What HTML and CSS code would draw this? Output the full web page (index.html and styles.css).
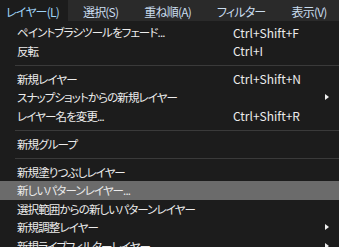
FILE: index.html
```html
<!DOCTYPE html>
<html lang="ja">
<head>
    <meta charset="UTF-8">
    <title>レイヤー</title>
    <link rel="stylesheet" href="styles.css">
</head>
<body>
    <div class="menubar">
        <span class="menubar-item active">レイヤー(L)</span>
        <span class="menubar-item">選択(S)</span>
        <span class="menubar-item">重ね順(A)</span>
        <span class="menubar-item">フィルター</span>
        <span class="menubar-item">表示(V)</span>
    </div>

    <div class="menu">
        <div class="menu-item"><span class="label">ペイントブラシツールをフェード...</span><span class="shortcut">Ctrl+Shift+F</span></div>
        <div class="menu-item"><span class="label">反転</span><span class="shortcut">Ctrl+I</span></div>
        <div class="separator"></div>
        <div class="menu-item"><span class="label">新規レイヤー</span><span class="shortcut">Ctrl+Shift+N</span></div>
        <div class="menu-item sub"><span class="label">スナップショットからの新規レイヤー</span></div>
        <div class="menu-item"><span class="label">レイヤー名を変更...</span><span class="shortcut">Ctrl+Shift+R</span></div>
        <div class="separator"></div>
        <div class="menu-item"><span class="label">新規グループ</span></div>
        <div class="separator"></div>
        <div class="menu-item"><span class="label">新規塗りつぶしレイヤー</span></div>
        <div class="menu-item hover"><span class="label">新しいパターンレイヤー...</span></div>
        <div class="menu-item"><span class="label">選択範囲からの新しいパターンレイヤー</span></div>
        <div class="menu-item sub"><span class="label">新規調整レイヤー</span></div>
        <div class="menu-item sub"><span class="label">新規ライブフィルターレイヤー</span></div>
    </div>
</body>
</html>
```

FILE: styles.css
```css
body {
    margin: 0;
    background-color: #1c1c1c;
    font-family: "Noto Sans CJK JP", sans-serif;
    font-size: 11.5px;
    font-feature-settings: "palt";
    overflow: hidden;
}

.menubar {
    display: flex;
    height: 21px;
    background-color: #2a2a2a;
    color: #c9dcee;
    font-size: 12px;
    letter-spacing: -0.8px;
}

.menubar-item {
    display: flex;
    align-items: center;
    padding: 2px 13px 0;
    white-space: nowrap;
}

.menubar-item.active {
    background-color: #1c1c1c;
    color: #9fd3f7;
    padding: 2px 9px 0 6px;
    margin-right: 2px;
}

.menu {
    padding-top: 2px;
    color: #ececec;
}

.menu-item {
    position: relative;
    display: flex;
    align-items: center;
    height: 18.5px;
    padding-left: 17px;
    white-space: nowrap;
}

.menu-item .label {
    width: 216px;
    letter-spacing: -0.9px;
}

.menu-item .shortcut {
    font-size: 12px;
}

.menu-item.hover {
    background-color: #6b6b6b;
}

.menu-item.sub::after {
    content: "";
    position: absolute;
    left: 325px;
    top: 6px;
    border-left: 4px solid #f0f0f0;
    border-top: 3.5px solid transparent;
    border-bottom: 3.5px solid transparent;
}

.separator {
    height: 1px;
    margin: 4.5px 0 4px 15px;
    background-color: #3a3a3a;
}
```
